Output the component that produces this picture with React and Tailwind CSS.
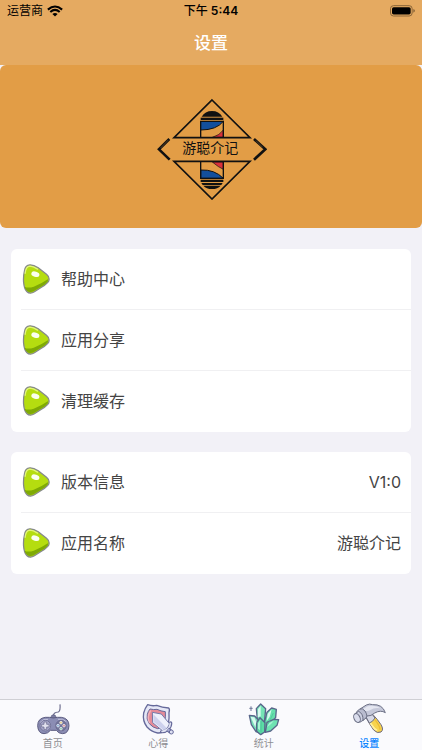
const help = [
  { label: '帮助中心' },
  { label: '应用分享' },
  { label: '清理缓存' },
];

const about = [
  { label: '版本信息', value: 'V1:0' },
  { label: '应用名称', value: '游聪介记' },
];

const tabs = [
  { label: '首页', icon: GamepadIcon },
  { label: '心得', icon: ShieldIcon },
  { label: '统计', icon: CrystalIcon },
  { label: '设置', icon: HammerIcon, active: true },
];

function WifiIcon() {
  return (
    <svg viewBox="0 0 46 34" className="h-3 w-4" fill="none" stroke="#000" strokeWidth="6">
      <path d="M2.500 13Q23-5 43.500 13" />
      <path d="M9.500 20Q23 8 36.500 20" />
      <path d="M23 33l-7.500-7.500q7.500-6 15 0z" fill="#000" stroke="none" />
    </svg>
  );
}

function BatteryIcon() {
  return (
    <svg viewBox="0 0 75 36" className="h-3 w-[25px]">
      <rect x="1.500" y="2" width="65" height="31" rx="9" fill="none" stroke="#8a6538" strokeWidth="3" />
      <rect x="6" y="6.500" width="56" height="22" rx="5" fill="#000" />
      <path d="M70 12q5 2 5 5.500t-5 5.500z" fill="#8a6538" />
    </svg>
  );
}

function Logo() {
  return (
    <svg viewBox="15 24 336 306" className="h-[102px] w-28" role="img" aria-label="游聪介记">
      {/* Barber pole, top half */}
      <path d="M155 80q10-17 31-17t31 17z" fill="#111" />
      <path d="M152 83h68v7h-68z" fill="#111" />
      <path d="M152 94h68q-20 26-68 26z" fill="#134f9c" />
      <path d="M220 94q-20 26-68 26" fill="none" stroke="#111" strokeWidth="3" />
      <path d="M220 120v22h-33q22-6 33-22z" fill="#d9303a" stroke="#111" strokeWidth="2" />
      <path d="M152 142V94h68v48" fill="none" stroke="#111" strokeWidth="4" />

      {/* Barber pole, bottom half */}
      <path d="M187 216h33v22q-14-6-33-22z" fill="#d9303a" stroke="#111" strokeWidth="2" />
      <path d="M152 240q42-2 68 25h-68z" fill="#134f9c" stroke="#111" strokeWidth="3" />
      <path d="M152 214v51h68v-51" fill="none" stroke="#111" strokeWidth="4" />
      <path d="M152 269h68v7h-68zM154 279h64l-4 6h-56zM160 287h52q-9 10-26 10t-26-10z" fill="#111" />

      {/* Frame */}
      <path d="M186 30L300 143H72z" fill="none" stroke="#111" strokeWidth="5" />
      <path d="M72 214h228L186 327z" fill="none" stroke="#111" strokeWidth="5" />
      <path d="M58 147L27 178l32 31M312 147l34 31-34 31" fill="none" stroke="#111" strokeWidth="8" />
      <path d="M55 150L32 174M318 152l20 20" stroke="#e29d46" strokeWidth="1" />
      <text x="181" y="190" textAnchor="middle" fontSize="42" fill="#111">游聪介记</text>
    </svg>
  );
}

function PlayIcon() {
  return (
    <svg viewBox="-2 -1 94 98" className="h-8 w-[30px] shrink-0" aria-hidden="true">
      <path
        d="M9 22Q11 4 26 3.500Q37 3 52 13L78 33Q89 42 85 54Q82 61 62 74L40 88Q26 97 16 87Q8 80 6 57Q5 38 9 22z"
        fill="#b5dd10" stroke="#85888c" strokeWidth="4"
      />
      <path d="M9 72Q20 78 38 72Q62 63 82 49Q86 55 72 65L40 85Q26 93 17 85Q11 80 9 72z" fill="#7faa05" />
      <path d="M11 30Q13 9 26 8q10 0 24 9" fill="none" stroke="#e1f47c" strokeWidth="4" strokeLinecap="round" />
      <ellipse cx="43" cy="33" rx="13" ry="8" transform="rotate(18 43 33)" fill="#fbfff0" />
    </svg>
  );
}

function GamepadIcon() {
  return (
    <svg viewBox="48 24 102 102" className="size-[34px]" aria-hidden="true">
      <path d="M120 28q2 20-5 23-15 1-15 12" fill="none" stroke="#6a6a8c" strokeWidth="3.500" />
      <path d="M91 69l5-9h9l5 9z" fill="#7d7ea3" stroke="#5c5c80" strokeWidth="2" />
      <path
        d="M76 67q12-1 24 2 12-3 24-2 23 3 23 25-1 23-19 24-12 0-19-10H91q-7 10-19 10-18-1-19-24 0-22 23-25z"
        fill="#8b8db4" stroke="#5c5c80" strokeWidth="3"
      />
      <path d="M60 83q9-13 24-10M114 73q15-4 25 7" fill="none" stroke="#c3c3dd" strokeWidth="3" />
      <circle cx="76" cy="92" r="16" fill="#a6a6c9" stroke="#656589" strokeWidth="2" />
      <path d="M72 81h8v7h7v8h-7v7h-8v-7h-7v-8h7z" fill="#e1e1ef" stroke="#656589" strokeWidth="2" />
      <circle cx="123" cy="92" r="16" fill="#73759b" stroke="#656589" strokeWidth="2" />
      <g stroke="#efeff5" strokeWidth="2">
        <circle cx="123" cy="83" r="4" fill="#e8cf8c" />
        <circle cx="114" cy="92" r="4" fill="#8eb5dc" />
        <circle cx="132" cy="92" r="4" fill="#e0959b" />
        <circle cx="123" cy="101" r="4" fill="#8ed0ae" />
      </g>
    </svg>
  );
}

function ShieldIcon() {
  return (
    <svg viewBox="48 24 102 102" className="size-[34px]" aria-hidden="true">
      <path
        d="M68 29q13 5 27 2 16 7 36 8 4 3 1 14 2 33-9 49-10 13-25 12-19-4-32-18-14-18-10-42 3-13 12-25z"
        fill="#e5e7f6" stroke="#65699a" strokeWidth="4" strokeLinejoin="round"
      />
      <path d="M75 42q11 3 21 1 12 6 25 7 2 29-8 43-6 8-15 8-15-3-25-15-10-14-6-28 2-9 8-16z" fill="#e58b98" stroke="#65699a" strokeWidth="3" />
      <path d="M77 46q-13 21-3 38" fill="none" stroke="#f2b3bc" strokeWidth="4" />
      <path d="M82 52l27 5 26 31-18 23-34-28z" fill="#eef0fb" stroke="#7579a8" strokeWidth="3" strokeLinejoin="round" />
      <path d="M85 58l40 41-7 8-32-26z" fill="#cdd1ed" />
      <path d="M137 84q0 12-9 19-8 8-18 7" fill="none" stroke="#65699a" strokeWidth="10" strokeLinecap="round" />
      <path d="M136 85q0 10-8 17-8 7-17 7" fill="none" stroke="#e3e5f5" strokeWidth="5" strokeLinecap="round" />
      <path d="M128 103l9 7" stroke="#65699a" strokeWidth="13" />
      <path d="M128 103l9 7" stroke="#a7abd2" strokeWidth="7" />
      <circle cx="139" cy="111" r="6" fill="#dfe1f3" stroke="#65699a" strokeWidth="3" />
    </svg>
  );
}

function CrystalIcon() {
  return (
    <svg viewBox="51 24 102 102" className="size-[34px]" aria-hidden="true">
      <g stroke="#58658a" strokeWidth="4" strokeLinejoin="round">
        <path d="M79 41l13-14 15 14-4 44-19 7z" fill="#75e4b5" />
        <path d="M111 52l14-13 14 4-2 24-27 37-12-2z" fill="#66dfac" />
        <path d="M111 82l20-9 15 1-5 17-19 17-16 4z" fill="#6ee3b2" />
        <path d="M58 61l16 2 17 18 4 35-17-6-14-21z" fill="#77deb8" />
        <path d="M80 83l10-15 15 15-1 28-12 8-12-10z" fill="#5bdca5" />
      </g>
      <path d="M92 32v32l-9 3 1-24zM125 43l-12 13-3 22 9-12zM62 66l11 1 6 14-3 16-6-14z" fill="#d7faef" />
      <path d="M91 74l-7 11v16l6 5zM132 77l-16 8-4 11 12-10z" fill="#a8f3d5" />
      <path d="M93 78v34M130 54l-16 34" fill="none" stroke="#48bd95" strokeWidth="2" />
      <path d="M63 34v14M58 40h10" stroke="#6d7596" strokeWidth="3" />
    </svg>
  );
}

function HammerIcon() {
  return (
    <svg viewBox="51 24 102 102" className="size-[34px]" aria-hidden="true">
      <path d="M93 68l20-10q14 14 25 31 9 15 0 22-11 6-22-6-12-17-23-37z" fill="#f8d44d" stroke="#6c6880" strokeWidth="3" />
      <path d="M103 78q13 24 22 27" fill="none" stroke="#fff0a0" strokeWidth="5" strokeLinecap="round" />
      <path d="M120 74q15 20 15 30" fill="none" stroke="#ecbb36" strokeWidth="4" />
      <path d="M91 62l16-10 13 17q-7 12-17 15z" fill="#d6d8e5" stroke="#6c7085" strokeWidth="3" />
      <path
        d="M75 42l19-12q10-5 19-1 29-2 38 24-14-9-32 1-11 10-23 9l-12 13z"
        fill="#c5c8d9" stroke="#6c7085" strokeWidth="3" strokeLinejoin="round"
      />
      <path d="M84 42l14-8q25-5 39 6-18-4-31 5-8 5-16 2z" fill="#e4e6f0" />
      <path d="M73 43q9-6 17 5 9 14 3 21l-9 7-20-25z" fill="#b9bccf" stroke="#6c7085" strokeWidth="3" />
      <path d="M60 56l11-7q14 7 13 27l-10 6z" fill="#cfd2e3" stroke="#6c7085" strokeWidth="3" />
      <ellipse cx="66" cy="69" rx="9" ry="14" transform="rotate(-24 66 69)" fill="#dadded" stroke="#6c7085" strokeWidth="3" />
    </svg>
  );
}

function Card({ items }) {
  return (
    <ul className="rounded-md bg-white pl-2.5">
      {items.map((item) => (
        <li key={item.label} className="border-b border-[#f0f0f2] last:border-transparent">
          <a href="#" className="flex h-[60px] items-center pr-2.5 text-base text-[#444]">
            <PlayIcon />
            <span className="ml-2.5">{item.label}</span>
            {item.value && <span className="ml-auto">{item.value}</span>}
          </a>
        </li>
      ))}
    </ul>
  );
}

export default function App() {
  return (
    <div className="flex min-h-screen flex-col bg-[#f2f1f7] font-['Inter','Noto_Sans_CJK_SC',sans-serif]">
      {/* Status bar and title */}
      <header className="bg-[#e5aa61]">
        <div className="grid h-[22px] grid-cols-3 items-center px-[7px] text-xs text-black">
          <div className="flex items-center gap-1">
            <span>运营商</span>
            <WifiIcon />
          </div>
          <span className="text-center font-semibold">
            <span className="font-medium">下午</span> 5:44
          </span>
          <div className="flex justify-end">
            <BatteryIcon />
          </div>
        </div>
        <h1 className="flex h-[43px] items-center justify-center text-[17px] font-medium text-white">设置</h1>
      </header>

      <main className="flex-1">
        <div className="flex justify-center rounded-md bg-[#e29d46] pt-[33px] pb-7">
          <Logo />
        </div>
        <div className="flex flex-col gap-5 px-[11px] py-[21px]">
          <Card items={help} />
          <Card items={about} />
        </div>
      </main>

      {/* Tab bar */}
      <nav className="grid grid-cols-4 border-t border-[#cfcfd4] bg-[#fafafd] pt-[3px]">
        {tabs.map(({ label, icon: Icon, active }) => (
          <a
            key={label}
            href="#"
            aria-current={active ? 'page' : undefined}
            className={`flex flex-col items-center text-[10px] leading-[13px] ${active ? 'font-medium text-[#0a84ff]' : 'text-[#8e8e93]'}`}
          >
            <Icon />
            {label}
          </a>
        ))}
      </nav>
    </div>
  );
}
